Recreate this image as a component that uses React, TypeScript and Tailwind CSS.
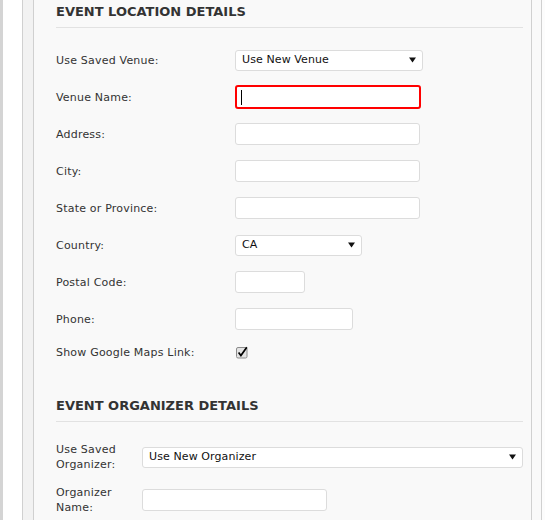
import React from 'react';

type Field =
  | { kind: 'select'; value: string; width: string }
  | { kind: 'input'; width: string }
  | { kind: 'focused'; width: string }
  | { kind: 'checkbox' };

type Row = { label: string; field: Field };

const locationRows: Row[] = [
  { label: 'Use Saved Venue:', field: { kind: 'select', value: 'Use New Venue', width: 'w-[188px]' } },
  { label: 'Venue Name:', field: { kind: 'focused', width: 'w-[186px]' } },
  { label: 'Address:', field: { kind: 'input', width: 'w-[185px]' } },
  { label: 'City:', field: { kind: 'input', width: 'w-[185px]' } },
  { label: 'State or Province:', field: { kind: 'input', width: 'w-[185px]' } },
  { label: 'Country:', field: { kind: 'select', value: 'CA', width: 'w-[127px]' } },
  { label: 'Postal Code:', field: { kind: 'input', width: 'w-[70px]' } },
  { label: 'Phone:', field: { kind: 'input', width: 'w-[118px]' } },
  { label: 'Show Google Maps Link:', field: { kind: 'checkbox' } },
];

const organizerRows: Row[] = [
  { label: 'Use Saved Organizer:', field: { kind: 'select', value: 'Use New Organizer', width: 'w-[381px]' } },
  { label: 'Organizer Name:', field: { kind: 'input', width: 'w-[185px]' } },
];

function Arrow() {
  return (
    <svg width="7" height="6" viewBox="0 0 7 6" className="mr-[6px] shrink-0">
      <path d="M0 0.5 H7 L3.5 5.5 Z" fill="#111" />
    </svg>
  );
}

function Check() {
  return (
    <svg width="13" height="13" viewBox="0 0 13 13" className="ml-[1px] block">
      <rect x="0.5" y="1.5" width="10.5" height="10.5" rx="1.5" fill="#e4e4e4" stroke="#8c8c8c" />
      <path d="M2.6 6.6 L4.9 9.6 L10.8 1.2" fill="none" stroke="#000" strokeWidth="1.7" />
    </svg>
  );
}

function FieldView({ field }: { field: Field }) {
  if (field.kind === 'select') {
    return (
      <div
        className={`${field.width} h-[21px] flex items-center justify-between bg-white border border-[#dcdcdc] rounded-[3px] pl-[6px] text-[11px] tracking-[0.1px] text-[#111]`}
      >
        <span>{field.value}</span>
        <Arrow />
      </div>
    );
  }
  if (field.kind === 'focused') {
    return (
      <div className={`${field.width} h-[24px] -my-[1px] flex items-center bg-white border-2 border-[#ff0000] rounded-[3px] pl-[4px]`}>
        <span className="w-px h-[15px] bg-black" />
      </div>
    );
  }
  if (field.kind === 'checkbox') {
    return <Check />;
  }
  return <input type="text" className={`${field.width} h-[22px] bg-white border border-[#dcdcdc] rounded-[3px] outline-none`} />;
}

function Section({
  title,
  rows,
  labelWidth,
  className,
  headMargin,
  rowGap,
}: {
  title: string;
  rows: Row[];
  labelWidth: string;
  className?: string;
  headMargin: string;
  rowGap: string;
}) {
  return (
    <div className={className}>
      <h3 className={`text-[13px] leading-[20px] font-bold text-[#333] pb-[5px] border-b border-[#e2e2e2] ${headMargin}`}>
        {title}
      </h3>
      <div className={`flex flex-col ${rowGap}`}>
        {rows.map((r) => (
          <div key={r.label} className={`flex items-center ${r.field.kind === 'checkbox' ? '' : 'min-h-[22px]'}`}>
            <label className={`${labelWidth} shrink-0 text-[11px] leading-[15px] tracking-[0.2px] text-[#333]`}>{r.label}</label>
            <FieldView field={r.field} />
          </div>
        ))}
      </div>
    </div>
  );
}

export default function App() {
  return (
    <div className="w-[545px] h-[520px] overflow-hidden flex bg-white font-['DejaVu_Sans',sans-serif]">
      <div className="w-[3px] shrink-0 bg-[#d4d4d4]" />
      <div className="w-[19px] shrink-0 bg-white" />
      <div className="w-[12px] shrink-0 bg-[#f2f2f2] border-l border-r border-[#d0d0d0]" />
      <div className="w-[498px] shrink-0 bg-[#f9f9f9] border-r border-[#d0d0d0] pt-[2px] pl-[22px] pr-[8px]">
        <Section
          title="EVENT LOCATION DETAILS"
          rows={locationRows}
          labelWidth="w-[179px]"
          headMargin="mb-[21px]"
          rowGap="gap-[15px]"
        />
        <Section
          title="EVENT ORGANIZER DETAILS"
          rows={organizerRows}
          labelWidth="w-[86px]"
          headMargin="mb-[20px]"
          rowGap="gap-[13px]"
          className="mt-[36px]"
        />
      </div>
      <div className="w-[10px] shrink-0 bg-[#f9f9f9] border-r border-[#d0d0d0]" />
      <div className="flex-1 bg-[#fcfcfc]" />
    </div>
  );
}
